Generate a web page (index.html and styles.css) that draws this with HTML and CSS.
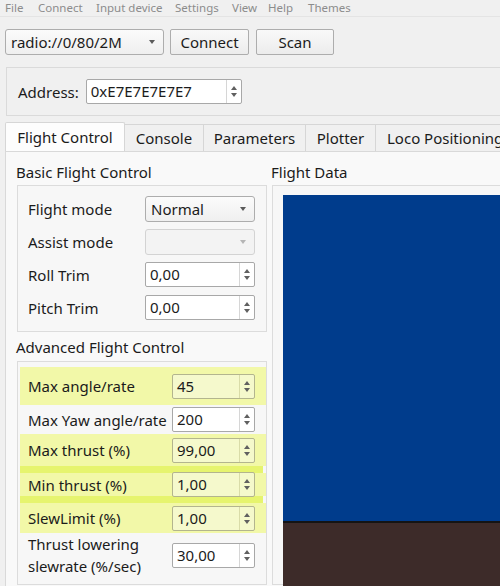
FILE: index.html
```html
<!DOCTYPE html>
<html>
<head>
<meta charset="utf-8">
<link rel="stylesheet" href="styles.css">
</head>
<body>
<div class="menubar">
  <span class="m-file">File</span>
  <span class="m-connect">Connect</span>
  <span class="m-input">Input device</span>
  <span class="m-settings">Settings</span>
  <span class="m-view">View</span>
  <span class="m-help">Help</span>
  <span class="m-themes">Themes</span>
</div>

<div class="toolbar">
  <div class="combo uri">
    <span class="combo-text">radio://0/80/2M</span>
    <span class="arrow"></span>
  </div>
  <div class="button btn-connect">Connect</div>
  <div class="button btn-scan">Scan</div>
</div>

<div class="address-box">
  <span class="address-label">Address:</span>
  <div class="spin address-spin">
    <span class="spin-text">0xE7E7E7E7E7</span>
    <span class="spin-btns"><span class="up"></span><span class="down"></span></span>
  </div>
</div>

<div class="tabbar">
  <div class="tab active t-flight">Flight Control</div>
  <div class="tab t-console">Console</div>
  <div class="tab t-params">Parameters</div>
  <div class="tab t-plotter">Plotter</div>
  <div class="tab t-loco">Loco Positioning</div>
</div>

<div class="pane">
  <div class="left-col">
    <div class="group-title">Basic Flight Control</div>
    <div class="group basic">
      <div class="row">
        <span class="label">Flight mode</span>
        <div class="combo small"><span class="combo-text">Normal</span><span class="arrow"></span></div>
      </div>
      <div class="row">
        <span class="label">Assist mode</span>
        <div class="combo small disabled"><span class="combo-text"></span><span class="arrow"></span></div>
      </div>
      <div class="row">
        <span class="label">Roll Trim</span>
        <div class="spin small"><span class="spin-text">0,00</span><span class="spin-btns"><span class="up"></span><span class="down"></span></span></div>
      </div>
      <div class="row">
        <span class="label">Pitch Trim</span>
        <div class="spin small"><span class="spin-text">0,00</span><span class="spin-btns"><span class="up"></span><span class="down"></span></span></div>
      </div>
    </div>

    <div class="group-title adv-title">Advanced Flight Control</div>
    <div class="group advanced">
      <div class="arow hl r-angle">
        <span class="label">Max angle/rate</span>
        <div class="spin narrow tinted"><span class="spin-text">45</span><span class="spin-btns"><span class="up"></span><span class="down"></span></span></div>
      </div>
      <div class="arow r-yaw">
        <span class="label">Max Yaw angle/rate</span>
        <div class="spin narrow"><span class="spin-text">200</span><span class="spin-btns"><span class="up"></span><span class="down"></span></span></div>
      </div>
      <div class="arow hl r-max">
        <span class="label">Max thrust (%)</span>
        <div class="spin narrow tinted"><span class="spin-text">99,00</span><span class="spin-btns"><span class="up"></span><span class="down"></span></span></div>
      </div>
      <div class="stroke"></div>
      <div class="arow hl r-min">
        <span class="label">Min thrust (%)</span>
        <div class="spin narrow tinted"><span class="spin-text">1,00</span><span class="spin-btns"><span class="up"></span><span class="down"></span></span></div>
      </div>
      <div class="stroke"></div>
      <div class="arow hl r-slew">
        <span class="label">SlewLimit (%)</span>
        <div class="spin narrow tinted"><span class="spin-text">1,00</span><span class="spin-btns"><span class="up"></span><span class="down"></span></span></div>
      </div>
      <div class="arow r-lower">
        <span class="label two">Thrust lowering<br>slewrate (%/sec)</span>
        <div class="spin narrow"><span class="spin-text">30,00</span><span class="spin-btns"><span class="up"></span><span class="down"></span></span></div>
      </div>
    </div>
  </div>

  <div class="right-col">
    <div class="group-title">Flight Data</div>
    <div class="group data">
      <div class="horizon">
        <div class="sky"></div>
        <div class="ground"></div>
      </div>
    </div>
  </div>
</div>
</body>
</html>
```

FILE: styles.css
```css
html, body {
  margin: 0;
  padding: 0;
  width: 500px;
  height: 586px;
  overflow: hidden;
  background: #f0f0f0;
  font-family: "Noto Sans", "DejaVu Sans", sans-serif;
  font-size: 15px;
  color: #1b1b1b;
}

/* menu bar */
.menubar {
  height: 16px;
  font-size: 11.5px;
  line-height: 15px;
  color: #8c8c8c;
  border-bottom: 1px solid #e4e4e4;
  position: relative;
}
.menubar span { position: absolute; top: 0; }
.m-file { left: 5px; }
.m-connect { left: 38px; }
.m-input { left: 96px; }
.m-settings { left: 175px; }
.m-view { left: 232px; }
.m-help { left: 268px; }
.m-themes { left: 308px; }

/* toolbar */
.toolbar {
  display: flex;
  margin-top: 12px;
  padding-left: 5px;
  height: 26px;
}
.combo {
  box-sizing: border-box;
  height: 26px;
  border: 1px solid #adadad;
  border-radius: 3px;
  background: linear-gradient(#fbfbfb, #efefef);
  display: flex;
  align-items: center;
  justify-content: space-between;
  padding: 0 8px 0 5px;
}
.combo.uri { width: 159px; }
.combo .combo-text { line-height: 24px; }
.arrow {
  width: 0; height: 0;
  border-left: 3.5px solid transparent;
  border-right: 3.5px solid transparent;
  border-top: 4px solid #5a5a5a;
}
.combo.disabled { background: #f3f3f3; border-color: #d3d3d3; }
.combo.disabled .arrow { border-top-color: #b5b5b5; }

.button {
  box-sizing: border-box;
  height: 26px;
  border: 1px solid #adadad;
  border-radius: 2px;
  background: linear-gradient(#f9f9f9, #ececec);
  display: flex;
  align-items: center;
  justify-content: center;
}
.btn-connect { width: 79px; margin-left: 6px; }
.btn-scan { width: 78px; margin-left: 7px; }

/* address */
.address-box {
  box-sizing: border-box;
  margin-top: 12px;
  margin-left: 6px;
  height: 49px;
  border: 1px solid #dadada;
  border-right: none;
  display: flex;
  align-items: center;
  padding-left: 11px;
  background: #f0f0f0;
}
.address-label { margin-right: 7px; }
.spin {
  box-sizing: border-box;
  height: 25px;
  border: 1px solid #a8a8a8;
  border-radius: 2px;
  background: #fff;
  display: flex;
  align-items: stretch;
}
.spin-text { flex: 1; padding-left: 4px; line-height: 23px; }
.spin-btns {
  width: 14px;
  border-left: 1px solid #d6d6d6;
  display: flex;
  flex-direction: column;
  align-items: center;
  justify-content: center;
  gap: 3px;
}
.spin-btns .up {
  width: 0; height: 0;
  border-left: 3.5px solid transparent;
  border-right: 3.5px solid transparent;
  border-bottom: 4px solid #606060;
}
.spin-btns .down {
  width: 0; height: 0;
  border-left: 3.5px solid transparent;
  border-right: 3.5px solid transparent;
  border-top: 4px solid #606060;
}
.address-spin { width: 156px; }

/* tabs */
.tabbar {
  display: flex;
  align-items: flex-end;
  margin-top: 6px;
  padding-left: 5px;
  height: 29px;
  box-sizing: border-box;
}
.tab {
  box-sizing: border-box;
  height: 27px;
  border: 1px solid #d6d6d6;
  border-bottom: none;
  border-left: none;
  background: #f0f0f0;
  display: flex;
  align-items: center;
  justify-content: center;
  flex-shrink: 0;
  white-space: nowrap;
}
.tab.active {
  height: 29px;
  background: #fdfdfd;
  border-left: 1px solid #d6d6d6;
  border-radius: 2px 2px 0 0;
}
.t-flight { width: 120px; }
.t-console { width: 79px; }
.t-params { width: 102px; }
.t-plotter { width: 70px; }
.t-loco { width: 140px; justify-content: flex-start; padding-left: 11px; }

/* pane */
.pane {
  box-sizing: border-box;
  margin-left: 5px;
  height: 440px;
  border-left: 1px solid #d9d9d9;
  border-top: 1px solid #d9d9d9;
  background: #f9f9f9;
  display: flex;
  padding-top: 10px;
}
.left-col {
  width: 262px;
  padding-left: 10px;
  box-sizing: border-box;
  flex-shrink: 0;
}
.right-col { flex: 1; padding-left: 3px; }
.group-title { height: 23px; line-height: 20px; }
.adv-title { margin-top: 5px; height: 24px; }

.group {
  box-sizing: border-box;
  border: 1px solid #dcdcdc;
  background: #f7f7f7;
  margin-left: 1px;
}
.basic {
  width: 250px;
  height: 147px;
  padding: 10px 11px 0 10px;
}
.row {
  height: 25px;
  margin-bottom: 8px;
  display: flex;
  align-items: center;
  justify-content: space-between;
}
.combo.small, .spin.small { width: 110px; }

.advanced {
  width: 250px;
  height: 224px;
  padding: 5px 0 0 2px;
}
.arow {
  display: flex;
  align-items: center;
  justify-content: space-between;
  padding: 0 11px 0 8px;
  width: 246px;
  box-sizing: border-box;
}
.r-angle { height: 38px; }
.r-yaw { height: 29px; }
.r-max { height: 32px; }
.r-min { height: 23px; }
.r-slew { height: 30px; }
.r-lower { height: 44px; }
.hl { background: #f2f8a8; }
.stroke {
  height: 7px;
  width: 243px;
  background: #e6f46e;
}
.spin.narrow { width: 83px; }
.spin.tinted { background: #f5f9cc; border-color: #b3b58e; }
.spin.tinted .spin-btns { border-left-color: #d9dca8; }
.label.two { line-height: 22px; }

.data {
  height: 400px;
  border-right: none;
  padding: 9px 0 0 10px;
  background: #f7f7f7;
}
.horizon {
  height: 400px;
  display: flex;
  flex-direction: column;
}
.sky { height: 326px; background: #003c8c; border-bottom: 2px solid #141414; }
.ground { flex: 1; background: #3d2b29; }
```
